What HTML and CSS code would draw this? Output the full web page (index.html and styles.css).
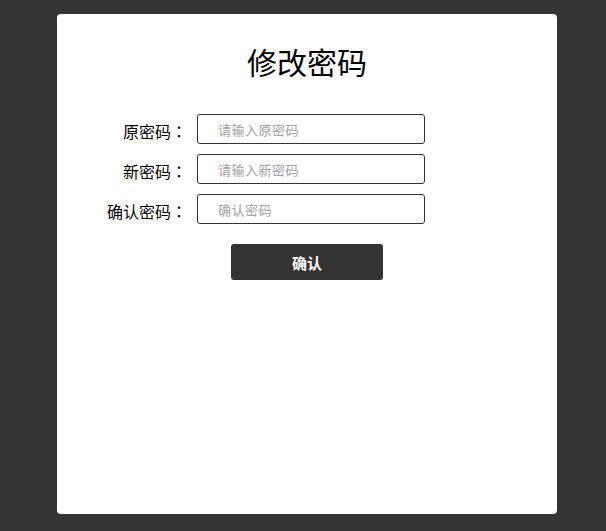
FILE: index.html
```html
<!DOCTYPE html>
<html>
<head>
  <meta charset="utf-8">
  <link rel="stylesheet" href="styles.css">
</head>
<body>

  <div class="card">
    <h1 class="card-title">修改密码</h1>

    <form class="pwd-form">
      <div class="form-row">
        <label class="form-label">原密码<span class="colon">：</span></label>
        <input type="password" class="form-input" placeholder="请输入原密码">
      </div>
      <div class="form-row">
        <label class="form-label">新密码<span class="colon">：</span></label>
        <input type="password" class="form-input" placeholder="请输入新密码">
      </div>
      <div class="form-row">
        <label class="form-label">确认密码<span class="colon">：</span></label>
        <input type="password" class="form-input" placeholder="确认密码">
      </div>
      <div class="form-actions">
        <button type="button" class="btn-submit">确认</button>
      </div>
    </form>
  </div>

</body>
</html>
```
FILE: styles.css
```css
body {
  margin: 0;
  padding: 14px 0 0 57px;
  background-color: #333333;
  font-family: "Noto Sans CJK SC", "Noto Sans", sans-serif;
}

.card {
  width: 500px;
  height: 500px;
  box-sizing: border-box;
  padding-top: 27px;
  background-color: #ffffff;
  border-radius: 4px;
}

.card-title {
  margin: 0;
  font-size: 30px;
  font-weight: normal;
  line-height: 40px;
  text-align: center;
  color: #000000;
}

.pwd-form {
  display: flex;
  flex-direction: column;
  gap: 10px;
  margin-top: 33px;
}

.form-row {
  display: flex;
  align-items: center;
  gap: 10px;
}

.form-label {
  width: 130px;
  padding-top: 4px;
  text-align: right;
  font-size: 16px;
  line-height: 24px;
  color: #000000;
}

/* centred full-width colon */
.colon {
  font-family: "Noto Sans CJK TC", sans-serif;
}

.form-input {
  width: 228px;
  height: 30px;
  box-sizing: border-box;
  padding: 0 20px;
  border: 1px solid #333333;
  border-radius: 3px;
  font-family: inherit;
  font-size: 13px;
  letter-spacing: 0.5px;
  outline: none;
}

.form-input::placeholder {
  color: #a0a0a0;
}

.form-actions {
  display: flex;
  justify-content: center;
  margin-top: 10px;
}

.btn-submit {
  width: 152px;
  height: 36px;
  border: none;
  border-radius: 3px;
  background-color: #333333;
  color: #ffffff;
  font-family: inherit;
  font-size: 15px;
  font-weight: bold;
}
```
